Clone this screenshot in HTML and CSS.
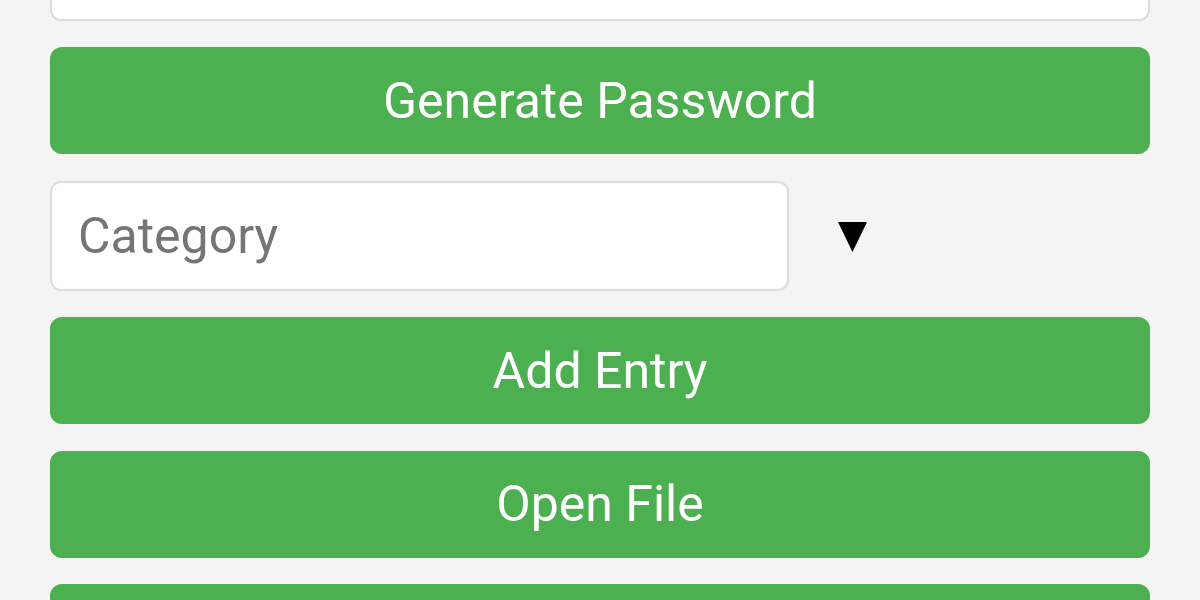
FILE: index.html
```html
<!DOCTYPE html>
<html lang="en">
<head>
<meta charset="utf-8">
<title>Password Manager</title>
<link rel="stylesheet" href="styles.css">
</head>
<body>
<main class="form">
  <input class="field" type="text" aria-label="Password">
  <button class="btn" type="button">Generate Password</button>
  <div class="select-row">
    <input class="field category" type="text" placeholder="Category">
    <svg class="arrow" width="29" height="30" viewBox="0 0 29 30" aria-hidden="true"><polygon points="0,0 29,0 14.5,30" fill="#000"/></svg>
  </div>
  <button class="btn" type="button">Add Entry</button>
  <button class="btn" type="button">Open File</button>
  <button class="btn" type="button" aria-label="Save File"></button>
</main>
</body>
</html>
```

FILE: styles.css
```css
html, body {
  margin: 0;
  padding: 0;
  background: #f4f4f4;
  font-family: Roboto, "Liberation Sans", Arial, sans-serif;
  overflow: hidden;
}

.form {
  display: flex;
  flex-direction: column;
  gap: 26.5px;
  padding: 0 50px;
  margin-top: -89.5px;
}

.field {
  box-sizing: border-box;
  height: 110px;
  width: 100%;
  background: #fff;
  border: 2px solid #dcdcdc;
  border-radius: 11px;
  padding: 0 26px;
  font-family: inherit;
  font-size: 50px;
  color: #333;
  outline: none;
}

.field::placeholder {
  color: #757575;
}

.btn {
  box-sizing: border-box;
  height: 107px;
  width: 100%;
  background: #4caf50;
  color: #fff;
  border: none;
  border-radius: 12px;
  font-family: inherit;
  font-size: 50px;
  font-weight: 400;
  padding: 0;
  flex-shrink: 0;
}

.select-row {
  display: flex;
  align-items: center;
  height: 110px;
}

.category {
  width: 739px;
  flex: none;
}

.arrow {
  margin-left: 49px;
  margin-top: 2px;
}
```
